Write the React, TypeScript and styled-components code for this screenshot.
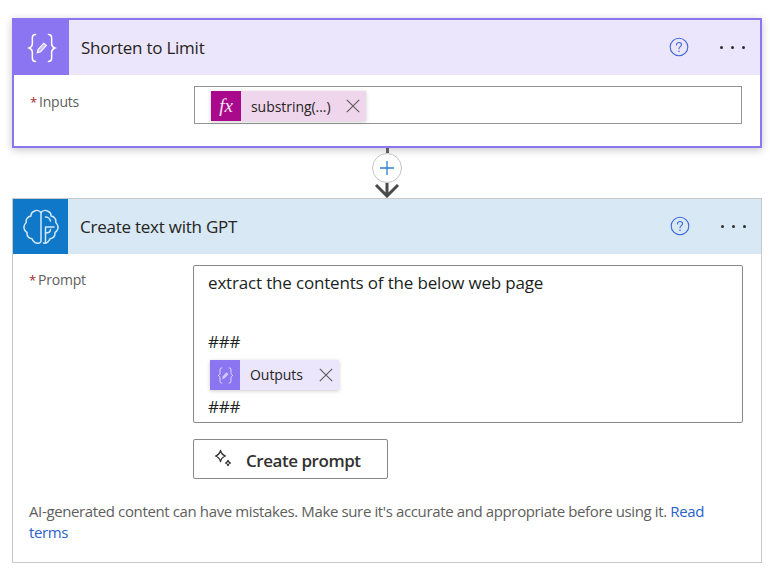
import React from 'react';
import styled, { createGlobalStyle } from 'styled-components';

const Global = createGlobalStyle`
  html, body { margin: 0; padding: 0; background: #fff; }
  body { font-family: "Open Sans", "Noto Sans", "Liberation Sans", sans-serif; color: #252423; }
  * { box-sizing: border-box; }
`;

const Page = styled.div`
  width: 770px;
  height: 579px;
  padding: 18px 8px 0 12px;
  overflow: hidden;
  display: flex;
  flex-direction: column;
`;

const Card = styled.section<{ $selected?: boolean }>`
  width: 750px;
  background: #fff;
  border: ${(p) => (p.$selected ? '2px solid #8c75f1' : '1px solid #c8c8c8')};
  box-shadow: ${(p) => (p.$selected ? '0 2px 8px rgba(0,0,0,.22)' : 'none')};
`;

const Header = styled.header<{ $bg: string }>`
  height: 55px;
  display: flex;
  align-items: center;
  background: ${(p) => p.$bg};
`;

const IconBox = styled.div<{ $bg: string }>`
  width: 55px;
  height: 55px;
  flex: none;
  display: flex;
  align-items: center;
  justify-content: center;
  background: ${(p) => p.$bg};
`;

const Title = styled.h2`
  flex: 1;
  margin: 0 0 0 12px;
  font-size: 17px;
  line-height: 22px;
  font-weight: 400;
  letter-spacing: -0.24px;
  color: #252423;
`;

const HeaderActions = styled.div`
  display: flex;
  align-items: center;
  gap: 31px;
  padding-right: 15px;
`;

const Help = styled.svg`
  display: block;
  margin-top: -2px;
`;

const Dots = styled.div`
  width: 25px;
  display: flex;
  justify-content: space-between;
  span {
    width: 3px;
    height: 3px;
    border-radius: 50%;
    background: #2c2c2c;
  }
`;

const Row = styled.div<{ $pad: string }>`
  display: flex;
  padding: ${(p) => p.$pad};
`;

const Label = styled.label<{ $top: number }>`
  width: 163px;
  flex: none;
  padding-left: 16px;
  padding-top: ${(p) => p.$top}px;
  font-size: 14px;
  line-height: 20px;
  letter-spacing: -0.2px;
  color: #605e5c;
  b {
    font-weight: 400;
    font-size: 13px;
    color: #a4262c;
    margin-right: 2px;
  }
`;

const InputBox = styled.div`
  width: 548px;
  height: 38px;
  margin-left: 17px;
  padding: 4px 0 0 16px;
  border: 1px solid #949494;
`;

const PromptBox = styled.div`
  width: 550px;
  height: 158px;
  margin-left: 17px;
  padding: 6px 14px 0;
  border: 1px solid #8a8886;
  border-radius: 2px;
  font-size: 17px;
  line-height: 22px;
  letter-spacing: -0.17px;
  color: #201f1e;
`;

const PromptLine = styled.div<{ $top?: number }>`
  height: 22px;
  margin-top: ${(p) => p.$top ?? 0}px;
`;

const Token = styled.div<{ $bg: string; $width: number; $inset?: string }>`
  width: ${(p) => p.$width}px;
  height: 30px;
  margin: ${(p) => p.$inset ?? '0'};
  display: flex;
  align-items: center;
  background: ${(p) => p.$bg};
  box-shadow: 0 1px 4px rgba(0, 0, 0, 0.2);
  font-size: 14px;
  letter-spacing: -0.05px;
  color: #252423;
`;

const TokenIcon = styled.div<{ $bg: string }>`
  width: 30px;
  height: 30px;
  flex: none;
  display: flex;
  align-items: center;
  justify-content: center;
  background: ${(p) => p.$bg};
`;

const FxGlyph = styled.span`
  font-family: "Liberation Serif", serif;
  font-style: italic;
  font-weight: 400;
  font-size: 19px;
  letter-spacing: 0;
  color: #f5e6f2;
`;

const TokenText = styled.span`
  flex: 1;
  padding-left: 10px;
  white-space: nowrap;
`;

const TokenClose = styled.svg`
  width: 14px;
  height: 14px;
  margin-right: 6px;
  flex: none;
`;

const Connector = styled.div`
  width: 750px;
  height: 50px;
  display: flex;
  flex-direction: column;
  align-items: center;
`;

const Stem = styled.div`
  width: 3px;
  height: 5px;
  background: #605e5c;
`;

const AddButton = styled.div`
  width: 30px;
  height: 30px;
  flex: none;
  border-radius: 50%;
  border: 1.5px solid #c4c4c4;
  background: #fff;
  display: flex;
  align-items: center;
  justify-content: center;
`;

const CreateButton = styled.button`
  width: 195px;
  height: 40px;
  margin: 16px 0 0 180px;
  padding: 2px 0 0 19px;
  display: flex;
  align-items: center;
  gap: 13px;
  background: #fff;
  border: 1px solid #8a8886;
  border-radius: 2px;
  font-family: inherit;
  font-size: 17px;
  font-weight: 600;
  letter-spacing: -0.46px;
  color: #323130;
  svg {
    margin-top: -2px;
  }
`;

const Disclaimer = styled.p`
  margin: 22px 0 0;
  padding: 0 42px 19px 16px;
  font-size: 15px;
  line-height: 21px;
  letter-spacing: -0.375px;
  color: #605e5c;
  a {
    color: #2b62c9;
    text-decoration: none;
  }
`;

const BracesIcon = ({ size, opacity = 1 }: { size: number; opacity?: number }) => (
  <svg width={size} height={size} viewBox="0 0 28 28" fill="none" stroke="#fff" strokeOpacity={opacity} strokeWidth="1.4" strokeLinecap="round">
    <path d="M8 1.500c-2.400 0-3 1.200-3 3V10c0 1.800-.9 3.200-3 4 2.100.8 3 2.200 3 4v5.500c0 1.800.6 3 3 3" />
    <path d="M20 1.500c2.400 0 3 1.200 3 3V10c0 1.800.9 3.200 3 4-2.100.8-3 2.200-3 4v5.500c0 1.800-.6 3-3 3" />
    <path d="M9.500 18.500l.8-3.200 5.400-5.800 2.400 2.300-5.400 5.800z" fill="#fff" fillOpacity={0.55} strokeWidth="1" />
  </svg>
);

const BrainIcon = () => (
  <svg width="36" height="36" viewBox="0 0 36 36" fill="none" stroke="#d3e8f8" strokeWidth="1.500" strokeLinecap="round" strokeLinejoin="round">
    <path d="M18 3.500C16.500 1.500 13.500 1 11.500 2 9 3 7.800 5 8 7 4.500 7.500 2.500 10.500 3.300 13.500.8 15.500.2 19 2 21.500c.6.800 1.300 1.400 2 1.800-.2 3.500 2 6 5 6.500 1 3 4 5.200 7 4.200 1-.3 1.700-.8 2-1.500z" />
    <path d="M18 3.500C19.500 1.500 22.500 1 24.500 2 27 3 28.200 5 28 7c3.500.5 5.500 3.500 4.700 6.500 2.500 2 3.100 5.500 1.300 8-.6.800-1.300 1.400-2 1.800.2 3.500-2 6-5 6.500-1 3-4 5.200-6.500 4.200" />
    <path d="M22.500 33.500V18H31" />
    <path d="M22.500 8c2 0 4.500 1.500 5 4" />
    <path d="M22.500 24c3 0 5-1.500 5-3.500" />
  </svg>
);

const HelpIcon = () => (
  <Help width="20" height="20" viewBox="0 0 20 20" fill="none">
    <circle cx="10" cy="10" r="8.800" stroke="#3f66d8" strokeWidth="1.100" />
    <path d="M7.500 7.900c0-1.500 1.100-2.400 2.500-2.400s2.500.9 2.500 2.200c0 1.900-2.500 1.900-2.500 4" stroke="#3f66d8" strokeWidth="1.100" strokeLinecap="round" />
    <circle cx="10" cy="14.300" r=".8" fill="#3f66d8" />
  </Help>
);

const CloseIcon = () => (
  <TokenClose viewBox="0 0 14 14" fill="none" stroke="#605e5c" strokeWidth="1.200">
    <path d="M.8.8l12.400 12.400M13.200.8L.8 13.200" />
  </TokenClose>
);

const SparkleIcon = () => (
  <svg width="20" height="20" viewBox="0 0 20 20" fill="none" stroke="#323130" strokeWidth="1.300" strokeLinejoin="round">
    <path d="M7.500 1.500c.7 3 1.800 4.300 5 5.500-3.200 1.200-4.300 2.500-5 5.500-.7-3-1.800-4.300-5-5.500 3.200-1.200 4.300-2.500 5-5.500z" />
    <path d="M15 11.500c.3 1.400.9 2 2.500 2.500-1.600.5-2.200 1.100-2.500 2.500-.3-1.400-.9-2-2.500-2.500 1.600-.5 2.200-1.100 2.500-2.500z" />
  </svg>
);

export default function App() {
  return (
    <Page>
      <Global />
      <Card $selected>
        <Header $bg="#ece6fd">
          <IconBox $bg="#8c75f1">
            <BracesIcon size={30} />
          </IconBox>
          <Title>Shorten to Limit</Title>
          <HeaderActions>
            <HelpIcon />
            <Dots><span /><span /><span /></Dots>
          </HeaderActions>
        </Header>
        <Row $pad="11px 0 22px">
          <Label $top={6}><b>*</b>Inputs</Label>
          <InputBox>
            <Token $bg="#f0d6ed" $width={155}>
              <TokenIcon $bg="#a90a8c"><FxGlyph>fx</FxGlyph></TokenIcon>
              <TokenText>substring(...)</TokenText>
              <CloseIcon />
            </Token>
          </InputBox>
        </Row>
      </Card>
      <Connector>
        <Stem />
        <AddButton>
          <svg width="16" height="16" viewBox="0 0 16 16" stroke="#2b7cd3" strokeWidth="1.300">
            <path d="M8 1v14M1 8h14" />
          </svg>
        </AddButton>
        <svg width="26" height="15" viewBox="0 0 26 15" fill="none" stroke="#4a4a4a" strokeWidth="3">
          <path d="M13 0v13M2 2l11 11L24 2" />
        </svg>
      </Connector>
      <Card>
        <Header $bg="#d8e8f4">
          <IconBox $bg="#0f78c8">
            <BrainIcon />
          </IconBox>
          <Title>Create text with GPT</Title>
          <HeaderActions>
            <HelpIcon />
            <Dots><span /><span /><span /></Dots>
          </HeaderActions>
        </Header>
        <Row $pad="11px 0 0">
          <Label $top={5}><b>*</b>Prompt</Label>
          <PromptBox>
            <PromptLine>extract the contents of the below web page</PromptLine>
            <PromptLine $top={37}>###</PromptLine>
            <Token $bg="#ece6fd" $width={129} $inset="7px 0 0 2px">
              <TokenIcon $bg="#8c75f1"><BracesIcon size={17} opacity={0.85} /></TokenIcon>
              <TokenText>Outputs</TokenText>
              <CloseIcon />
            </Token>
            <PromptLine $top={6}>###</PromptLine>
          </PromptBox>
        </Row>
        <CreateButton>
          <SparkleIcon />
          Create prompt
        </CreateButton>
        <Disclaimer>
          AI-generated content can have mistakes. Make sure it's accurate and appropriate before using it. <a href="#terms">Read terms</a>
        </Disclaimer>
      </Card>
    </Page>
  );
}
